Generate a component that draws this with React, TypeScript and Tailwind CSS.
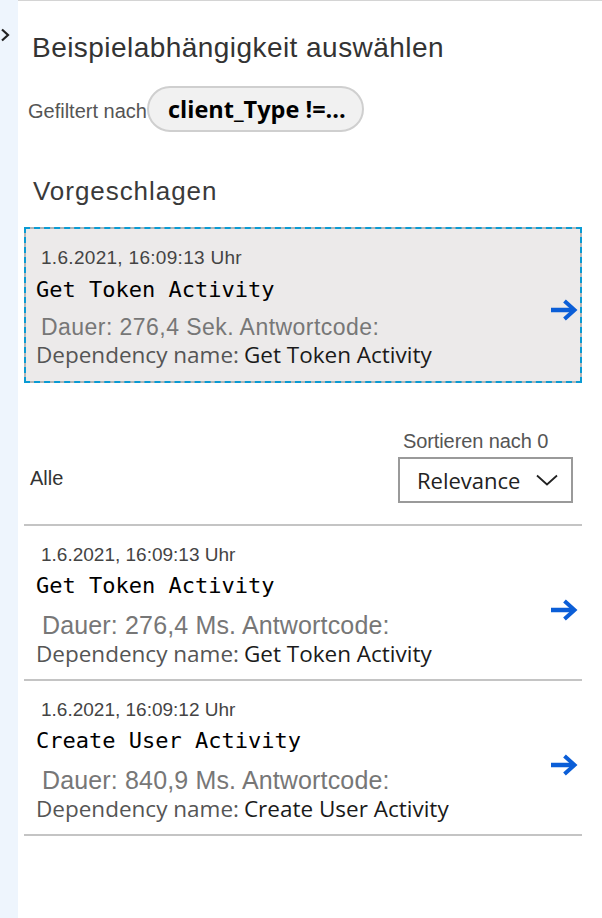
import React from 'react';

// arrow used on each dependency row
const GoArrow = () => (
  <svg width="28" height="22" viewBox="0 0 28 22" fill="none" className="shrink-0">
    <path d="M1 11H24" stroke="#0b5ed7" strokeWidth="4.5" />
    <path d="M14.5 2L24.5 11L14.5 20" stroke="#0b5ed7" strokeWidth="4" strokeLinejoin="miter" />
  </svg>
);

interface DepItem {
  time: string;
  title: string;
  duration: string;
  name: string;
}

const items: DepItem[] = [
  { time: '1.6.2021, 16:09:13 Uhr', title: 'Get Token Activity', duration: 'Dauer: 276,4 Ms. Antwortcode:', name: 'Get Token Activity' },
  { time: '1.6.2021, 16:09:12 Uhr', title: 'Create User Activity', duration: 'Dauer: 840,9 Ms. Antwortcode:', name: 'Create User Activity' },
];

function DepRow({ item }: { item: DepItem }) {
  return (
    <div className="flex items-center border-b-2 border-[#c4c4c4] pl-[12px] pr-[4px] pt-[18px] pb-[13px]">
      <div className="flex-1">
        <div className="ml-[5px] text-[19px] leading-[22px] text-[#444]">{item.time}</div>
        <div className="mt-[7px] font-['DejaVu_Sans_Mono',monospace] text-[22px] leading-[26px] text-black">{item.title}</div>
        <div className="mt-[14px] ml-[6px] text-[25px] leading-[24px] text-[#777] tracking-[0.15px]">{item.duration}</div>
        <div className="mt-[5px] font-['Open_Sans',sans-serif] text-[22.5px] leading-[24px]">
          <span className="text-[#555]">Dependency name:</span>
          <span className="ml-[5px] text-[#1a1a1a]">{item.name}</span>
        </div>
      </div>
      <div className="mt-[10px]">
        <GoArrow />
      </div>
    </div>
  );
}

export default function App() {
  return (
    <div className="flex min-h-[918px] w-full bg-white font-['Liberation_Sans',Arial,sans-serif]">
      {/* collapsed side strip */}
      <div className="w-[18px] shrink-0 bg-[#eef5fd] pt-[28px]">
        <svg width="11" height="14" viewBox="0 0 11 14" fill="none">
          <path d="M2 1.5L8 7L2 12.5" stroke="#222" strokeWidth="2.2" />
        </svg>
      </div>

      <main className="flex-1 border-t border-[#d4d4d4] pl-[6px] pr-[20px]">
        <h1 className="mt-[31px] ml-[8px] text-[28px] leading-[32px] text-[#333] tracking-[0.45px]">
          Beispielabhängigkeit auswählen
        </h1>

        <div className="mt-[22px] ml-[4px] flex items-center">
          <span className="mt-[4px] text-[20px] leading-[24px] text-[#555]">Gefiltert nach</span>
          <span className="flex h-[46px] items-center rounded-full border-2 border-[#cfcfcf] bg-[#f1f1f1] pl-[19px] pr-[16px] font-['Open_Sans',sans-serif] text-[23.5px] font-bold leading-[30px] text-black">
            client_Type !=...
          </span>
        </div>

        <h2 className="mt-[44px] ml-[9px] text-[26px] leading-[30px] text-[#3a3a3a] tracking-[0.95px]">Vorgeschlagen</h2>

        {/* suggested sample */}
        <div className="mt-[21px] flex h-[156px] items-center border-2 border-[#b5b5b5] bg-[#eceaea] pl-[10px] pr-[2px] outline-2 -outline-offset-2 outline-dashed outline-[#0a9bd3]">
          <div className="flex-1 self-start pt-[18px]">
            <div className="ml-[5px] text-[19px] leading-[22px] text-[#444] tracking-[0.3px]">1.6.2021, 16:09:13 Uhr</div>
            <div className="mt-[8px] font-['DejaVu_Sans_Mono',monospace] text-[22px] leading-[26px] text-black">Get Token Activity</div>
            <div className="mt-[12px] ml-[5px] text-[23px] leading-[24px] text-[#777] tracking-[0.45px]">Dauer: 276,4 Sek. Antwortcode:</div>
            <div className="mt-[4px] font-['Open_Sans',sans-serif] text-[22.5px] leading-[24px]">
              <span className="text-[#555]">Dependency name:</span>
              <span className="ml-[5px] text-[#1a1a1a]">Get Token Activity</span>
            </div>
          </div>
          <div className="mt-[10px]">
            <GoArrow />
          </div>
        </div>

        {/* list header */}
        <div className="mt-[46px] flex items-end justify-between">
          <span className="mb-[13px] ml-[6px] text-[20px] leading-[24px] text-[#333]">Alle</span>
          <div className="mr-[9px] flex flex-col">
            <span className="ml-[5px] text-[20px] leading-[24px] text-[#555] tracking-[-0.1px]">Sortieren nach 0</span>
            <div className="mt-[4px] flex h-[46px] w-[175px] items-center justify-between border-2 border-[#9a9a9a] pl-[17px] pr-[13px]">
              <span className="font-['Open_Sans',sans-serif] text-[22px] leading-[28px] text-[#222]">Relevance</span>
              <svg width="22" height="12" viewBox="0 0 22 12" fill="none">
                <path d="M1 1.5L11 10.5L21 1.5" stroke="#222" strokeWidth="1.8" />
              </svg>
            </div>
          </div>
        </div>

        <div className="mt-[21px] border-t-2 border-[#c4c4c4]">
          {items.map((it, i) => (
            <DepRow key={i} item={it} />
          ))}
        </div>
      </main>
    </div>
  );
}
